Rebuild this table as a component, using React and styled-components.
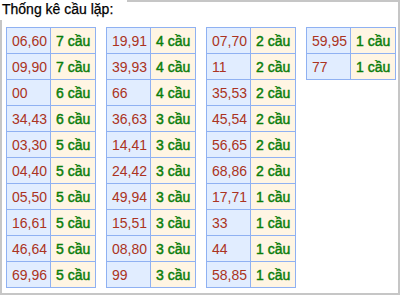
import styled, { createGlobalStyle } from "styled-components";

const GlobalStyle = createGlobalStyle`
  body {
    margin: 0;
    background: #fff;
    font-family: "Liberation Sans", Arial, sans-serif;
  }
`;

const Frame = styled.div`
  position: relative;
  box-sizing: border-box;
  width: 400px;
  height: 295px;
  border: 2px solid #c6c6c6;
  padding: 25px 0 0 4px;
`;

const Title = styled.div`
  position: absolute;
  top: -2px;
  left: -2px;
  padding: 1px 14px 3px 2px;
  background: #fff;
  font-size: 14px;
  line-height: 16px;
  color: #000;
  -webkit-text-stroke: 0.25px #000;
`;

const Tables = styled.div`
  display: flex;
  align-items: flex-start;
  gap: 10px;
`;

const Table = styled.table`
  width: 89px;
  table-layout: fixed;
  border-collapse: collapse;
  border: 1px solid #8fb1f2;
`;

const Cell = styled.td`
  box-sizing: border-box;
  height: 26px;
  padding: 0 0 0 5px;
  border: 1px solid #8fb1f2;
  font-size: 14px;
  line-height: 16px;
  white-space: nowrap;
  background: ${(p) => (p.count ? "#fff5e3" : "#e1edff")};
  color: ${(p) => (p.count ? "#0a7d0a" : "#ab3322")};
  -webkit-text-stroke: ${(p) => (p.count ? "0.45px #0a7d0a" : "0")};
  width: ${(p) => (p.count ? "45px" : "44px")};
`;

const groups = [
  [
    ["06,60", 7], ["09,90", 7], ["00", 6], ["34,43", 6], ["03,30", 5],
    ["04,40", 5], ["05,50", 5], ["16,61", 5], ["46,64", 5], ["69,96", 5],
  ],
  [
    ["19,91", 4], ["39,93", 4], ["66", 4], ["36,63", 3], ["14,41", 3],
    ["24,42", 3], ["49,94", 3], ["15,51", 3], ["08,80", 3], ["99", 3],
  ],
  [
    ["07,70", 2], ["11", 2], ["35,53", 2], ["45,54", 2], ["56,65", 2],
    ["68,86", 2], ["17,71", 1], ["33", 1], ["44", 1], ["58,85", 1],
  ],
  [["59,95", 1], ["77", 1]],
];

export default function App() {
  return (
    <>
      <GlobalStyle />
      <Frame>
        <Title>Thống kê cầu lặp:</Title>
        <Tables>
          {groups.map((rows, i) => (
            <Table key={i}>
              <tbody>
                {rows.map(([pair, n]) => (
                  <tr key={pair}>
                    <Cell>{pair}</Cell>
                    <Cell count>{n} cầu</Cell>
                  </tr>
                ))}
              </tbody>
            </Table>
          ))}
        </Tables>
      </Frame>
    </>
  );
}
